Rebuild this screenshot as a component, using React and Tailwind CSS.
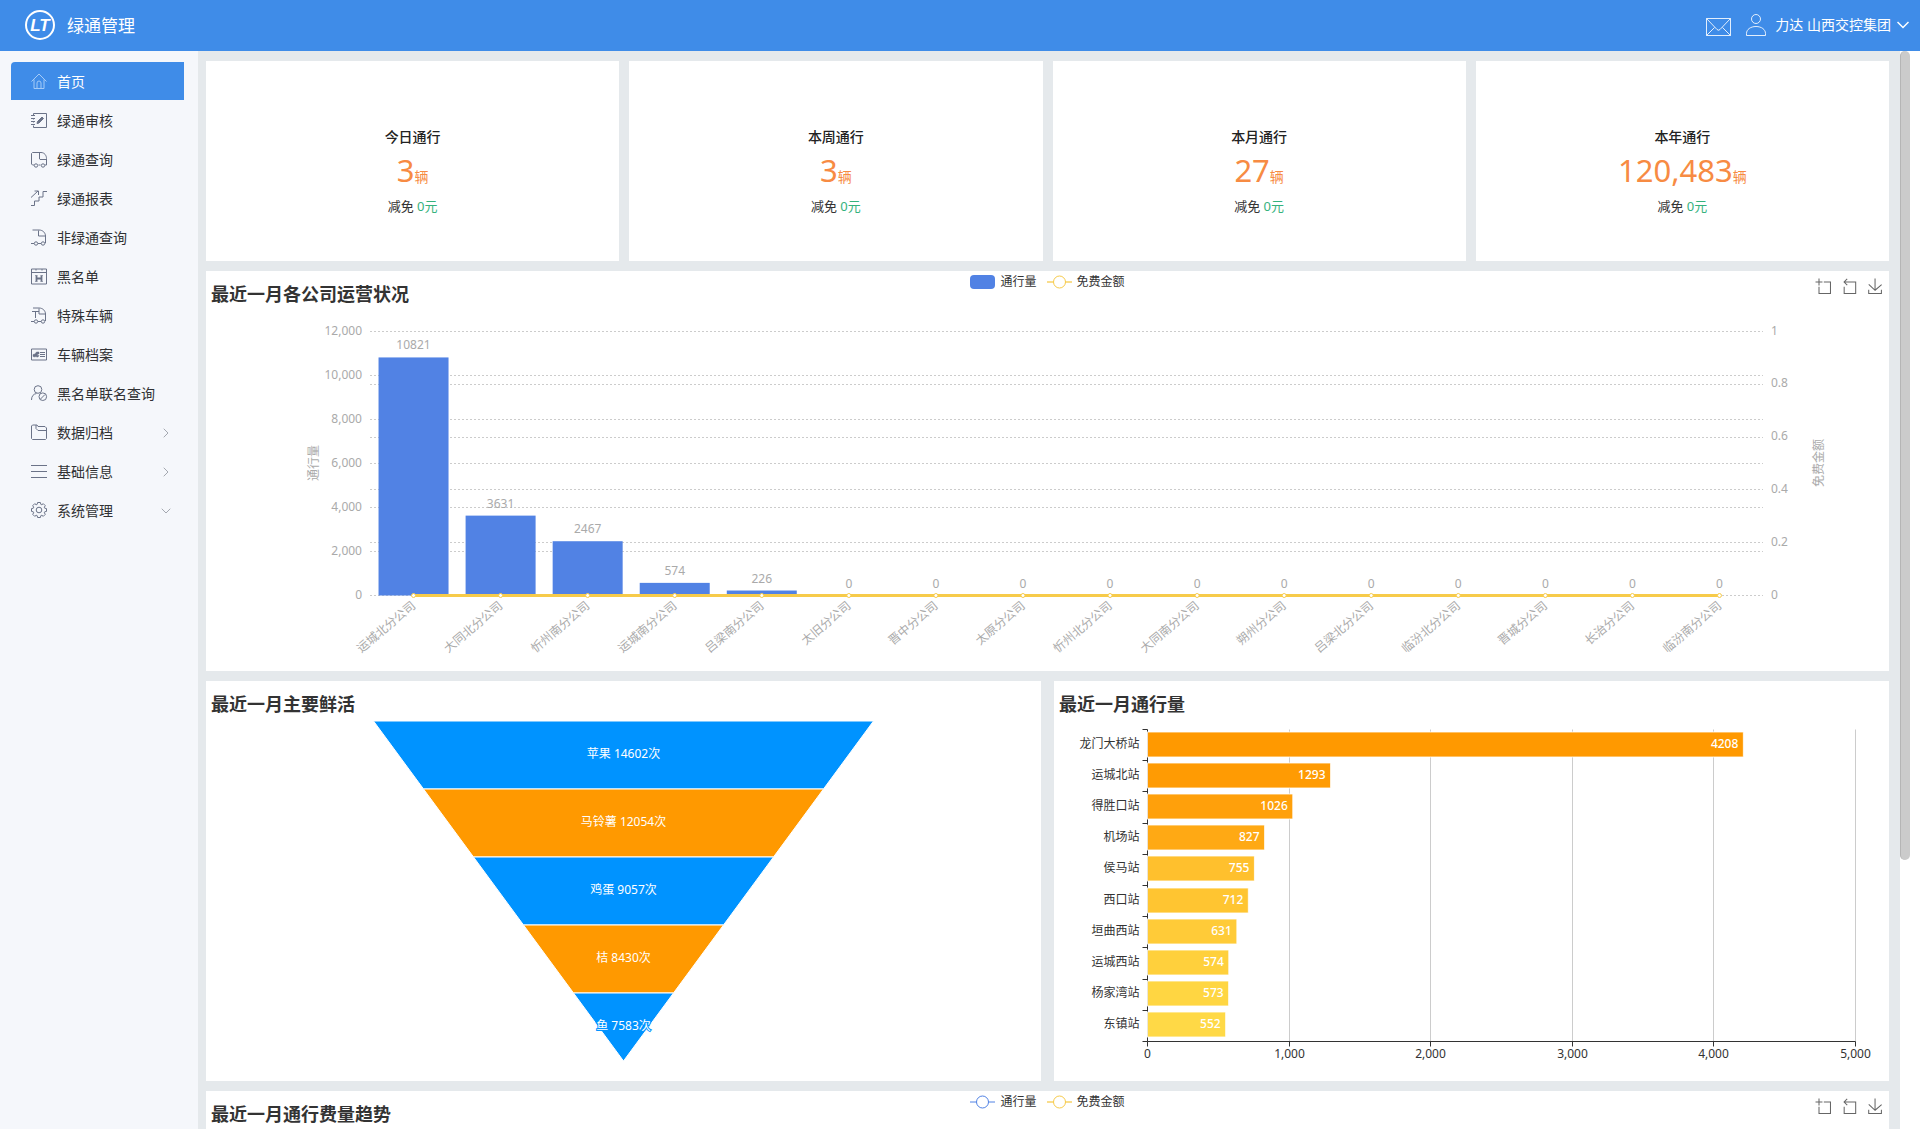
import { ChevronDown, ChevronRight } from "lucide-react";

const icons = {
  home: <path d="M.5 8.5 8 1l7.5 7.5M3 6.5v9h10v-9M6 15.5V10a2 2 0 0 1 4 0v5.5" />,
  audit: (
    <>
      <path d="M2.5 3.5v-2h13v14h-13v-2M2.5 6v1.5M2.5 9.5v1M0 3.5h4M0 6.5h4M0 9.5h4M0 12.5h4" />
      <path d="M6 11.500l.5-2 4.500-4.500 1.500 1.500-4.500 4.500z" fill="currentColor" />
    </>
  ),
  truck: (
    <>
      <path d="M3 14H1.5L.5 13V2.5l1-1H10c3.5 0 5.5 3 5.5 6V14H14M7.5 14h2M8.5 1.5V8l.5.5h6.5" />
      <circle cx="5" cy="14.5" r="1.7" />
      <circle cx="12" cy="14.5" r="1.7" />
    </>
  ),
  stairs: <path d="M0 15.5h3.5V11H8V7h4V1.500h4M0 7.500l7-6.500M3.500 1h4v4" />,
  truckOpen: (
    <>
      <path d="M1.5 1H8c4 0 6.5 3 6.5 6v7H14M7.5 1.5V7h7M0 14.5h3M7 14.5h3" />
      <circle cx="5" cy="14.5" r="1.7" />
      <circle cx="12" cy="14.5" r="1.7" />
    </>
  ),
  black: (
    <>
      <path d="M.5 1h15v15H.5zM.5 4.5h15M5 1v1.5M11 1v1.5" />
      <path d="M5.5 7.5v6M10.5 7.5v6M5.5 10.5h5" strokeWidth="1.8" />
      <path d="M4 7.500h2.500M9.500 7.500H12M4 13.500h2.500M9.500 13.500H12" strokeWidth=".6" />
    </>
  ),
  special: (
    <>
      <path d="M1 4.5h7M4.5 4.5V11M2 1h6c4 0 6.5 3 6.5 6v7M8 1.5V7h6.5M0 14.5h3M7 14.5h3" />
      <circle cx="5" cy="14.5" r="1.7" />
      <circle cx="12" cy="14.5" r="1.7" />
    </>
  ),
  archive: (
    <>
      <path d="M.5 3h15v11H.5zM9 6.5h5M9 8.5h5M9 10.5h5" />
      <path d="M2 8.5 4 8l1.5-2H8v2H6.5v1.5H8L7 11H5.5v-1L4 11l-2-.5z" fill="currentColor" strokeWidth=".5" />
    </>
  ),
  userBan: (
    <>
      <circle cx="7" cy="4.5" r="3.8" />
      <path d="M.5 15c0-4 2-6 5-6.5M9.5 14l4.5-4.5" />
      <circle cx="11.8" cy="11.7" r="3.8" />
    </>
  ),
  folder: <path d="M1.5 1H6l1 1.5h7L15.5 4v10.5l-1 1h-13l-1-1V2zM5 1v3.5l2 2h8.5" />,
  list: <path d="M0 2.5h16M0 8.5h16M0 14.5h16" />,
  gear: (
    <>
      <path
        strokeLinejoin="round"
        d="M6.6.5H9.4L9.8 2.3 10.8 2.7 12.3 1.7 14.3 3.7 13.3 5.2 13.7 6.2 15.5 6.6V9.4L13.7 9.8 13.3 10.8 14.3 12.3 12.3 14.3 10.8 13.3 9.8 13.7 9.4 15.5H6.6L6.2 13.7 5.2 13.3 3.7 14.3 1.7 12.3 2.7 10.8 2.3 9.8.5 9.4V6.6L2.3 6.2 2.7 5.2 1.7 3.7 3.7 1.7 5.2 2.7 6.2 2.3z"
      />
      <circle cx="8" cy="8" r="2.8" />
    </>
  ),
};

const menu = [
  { icon: "home", label: "首页", active: true },
  { icon: "audit", label: "绿通审核" },
  { icon: "truck", label: "绿通查询" },
  { icon: "stairs", label: "绿通报表" },
  { icon: "truckOpen", label: "非绿通查询" },
  { icon: "black", label: "黑名单" },
  { icon: "special", label: "特殊车辆" },
  { icon: "archive", label: "车辆档案" },
  { icon: "userBan", label: "黑名单联名查询" },
  { icon: "folder", label: "数据归档", arrow: ChevronRight },
  { icon: "list", label: "基础信息", arrow: ChevronRight },
  { icon: "gear", label: "系统管理", arrow: ChevronDown },
];

const stats = [
  { label: "今日通行", value: "3" },
  { label: "本周通行", value: "3" },
  { label: "本月通行", value: "27" },
  { label: "本年通行", value: "120,483" },
];

const companies = [
  ["运城北分公司", 10821],
  ["大同北分公司", 3631],
  ["忻州南分公司", 2467],
  ["运城南分公司", 574],
  ["吕梁南分公司", 226],
  ["太旧分公司", 0],
  ["晋中分公司", 0],
  ["太原分公司", 0],
  ["忻州北分公司", 0],
  ["大同南分公司", 0],
  ["朔州分公司", 0],
  ["吕梁北分公司", 0],
  ["临汾北分公司", 0],
  ["晋城分公司", 0],
  ["长治分公司", 0],
  ["临汾南分公司", 0],
];

const goods = ["苹果 14602次", "马铃薯 12054次", "鸡蛋 9057次", "桔 8430次", "鱼 7583次"];

const stations = [
  ["龙门大桥站", 4208, "#ff9900"],
  ["运城北站", 1293, "#ff9b03"],
  ["得胜口站", 1026, "#ffa00b"],
  ["机场站", 827, "#ffa914"],
  ["侯马站", 755, "#ffc02d"],
  ["西口站", 712, "#ffc531"],
  ["垣曲西站", 631, "#ffcb38"],
  ["运城西站", 574, "#ffd03c"],
  ["杨家湾站", 573, "#ffd642"],
  ["东镇站", 552, "#ffd946"],
];

const tools = [
  ["区域缩放", "M0,13.5h26.9 M13.5,26.9V0 M32.1,13.5H58V58H13.5 V32.1"],
  ["还原", "M22,1.4L9.9,13.5l12.3,12.3 M10.3,13.5H54.9v44.6 H10.3v-26"],
  ["保存为图片", "M4.7,22.9L29.3,45.5L54.7,23.4M4.6,43.6L4.6,58L53.8,58L53.8,43.6M29.2,45.1L29.2,0"],
];

function Header() {
  return (
    <header className="flex h-[51px] shrink-0 items-center justify-between bg-[#3f8ce8] pl-[25px] pr-[11px] pb-px text-white">
      <div className="flex items-center gap-3">
        <svg width="30" height="30" viewBox="0 0 30 30" aria-hidden="true">
          <circle cx="15" cy="15" r="14" fill="none" stroke="#fff" strokeWidth="2" />
          <text x="15" y="21" textAnchor="middle" fill="#fff" className="font-['Liberation_Sans',sans-serif] text-[17px] font-bold italic">
            LT
          </text>
        </svg>
        <h1 className="pt-px text-[17px]">绿通管理</h1>
      </div>
      <div className="flex items-center">
        <button aria-label="消息" className="mr-[15px] mt-1">
          <svg width="25" height="18" viewBox="0 0 25 18" fill="none" stroke="#fff" strokeOpacity="0.85" strokeWidth="1">
            <path d="M.5.5h24v17H.5zM.5.5 11 11.5q1.500 1.500 3 0L24.500.5M.5 17.500l8-8M24.500 17.500l-8-8" />
          </svg>
        </button>
        <button className="flex items-center text-sm">
          <svg width="20" height="22" viewBox="0 0 20 22" fill="none" stroke="#fff" strokeOpacity="0.85" className="mr-[9px]">
            <circle cx="10" cy="5" r="4.5" />
            <path d="M.5 21.5v-2c0-4 4-7 9.5-7s9.5 3 9.5 7v2z" />
          </svg>
          力达 山西交控集团
          <svg width="12" height="8" viewBox="0 0 12 8" fill="none" stroke="#fff" strokeWidth="1.5" className="ml-[6px]">
            <path d="M.5 1 6 6.5 11.5 1" />
          </svg>
        </button>
      </div>
    </header>
  );
}

function Sidebar() {
  return (
    <nav className="flex w-[198px] shrink-0 flex-col gap-px bg-[#f5f7fb] pl-[11px] pr-[14px] pt-[11px]">
      {menu.map((item) => (
        <a
          key={item.label}
          href="#"
          className={`flex h-[38px] items-center pt-px pl-5 pr-[10px] text-sm ${
            item.active ? "rounded-tl-sm bg-[#3f8ce8] text-white" : "text-[#303133]"
          }`}
        >
          <svg
            width="16"
            height="17"
            viewBox="0 0 16 17"
            fill="none"
            stroke="currentColor"
            strokeWidth="1"
            className={`mr-[10px] shrink-0 overflow-visible ${item.active ? "text-[#a5cbf7]" : "text-[#6b7388]"}`}
          >
            {icons[item.icon]}
          </svg>
          <span className="flex-1 whitespace-nowrap">{item.label}</span>
          {item.arrow && <item.arrow size={16} strokeWidth={1.5} className="text-[#a4a8b0]" />}
        </a>
      ))}
    </nav>
  );
}

function StatCard({ label, value }) {
  return (
    <section className="flex h-[200px] flex-col items-center justify-center bg-white pt-5">
      <h2 className="text-sm leading-5 font-medium text-[#222]">{label}</h2>
      <p className="pt-1 text-sm leading-[38px] text-[#f78b43]">
        <span className="text-[31px]">{value}</span>辆
      </p>
      <p className="text-[13px] leading-5 text-[#333]">
        减免 <span className="text-[#35b27d]">0元</span>
      </p>
    </section>
  );
}

function Legend({ bar }) {
  return (
    <div className="flex items-center gap-[10px] pt-[3px] text-xs leading-4 text-[#333]">
      <span className="flex items-center gap-[5px]">
        <svg width="25" height="14" viewBox="0 0 25 14">
          {bar ? (
            <rect width="25" height="14" rx="4" fill="#5182e4" />
          ) : (
            <>
              <path d="M0 7h25" stroke="#5182e4" strokeWidth="1" />
              <circle cx="12.5" cy="7" r="6" fill="#fff" stroke="#5182e4" />
            </>
          )}
        </svg>
        通行量
      </span>
      <span className="flex items-center gap-[5px]">
        <svg width="25" height="14" viewBox="0 0 25 14">
          <path d="M0 7h25" stroke="#f9dd8c" strokeWidth="2" />
          <circle cx="12.5" cy="7" r="6" fill="#fff" stroke="#f7cb4a" />
        </svg>
        免费金额
      </span>
    </div>
  );
}

function Panel({ title, legend, children }) {
  return (
    <section className="h-[400px] shrink-0 bg-white">
      <div className="grid h-10 grid-cols-[1fr_auto_1fr] items-start">
        <h2 className="pl-[5px] pt-2 text-lg leading-[30px] font-bold whitespace-nowrap text-[#333]">{title}</h2>
        {legend && <Legend bar={legend === "bar"} />}
        {legend && (
          <div className="flex justify-end gap-[10px] pt-[7px] pr-[6px]">
            {tools.map(([name, d]) => (
              <button key={name} aria-label={name}>
                <svg width="16" height="16" viewBox="-2 -2 62 62" fill="none" stroke="#666" strokeWidth="4">
                  <path d={d} />
                </svg>
              </button>
            ))}
          </div>
        )}
      </div>
      {children}
    </section>
  );
}

function CompanyChart() {
  const left = 164;
  const right = 1557;
  const top = 20.5;
  const bottom = 284.5;
  const h = bottom - top;
  const step = (right - left) / companies.length;
  const cx = (i) => left + step * (i + 0.5);
  const snap = (y) => Math.floor(y) + 0.5;

  return (
    <svg viewBox="0 0 1683 360" className="h-[360px] w-full text-xs" fill="#aaa">
      {[0, 1, 2, 3, 4, 5, 6].map((n) => (
        <g key={n}>
          <path d={`M${left} ${snap(bottom - (h * n) / 6)}H${right}`} stroke="#ccc" strokeDasharray="2 2" />
          <text x={left - 8} y={bottom - (h * n) / 6 + 3} textAnchor="end">
            {(n * 2000).toLocaleString("en-US")}
          </text>
        </g>
      ))}
      {[0, 1, 2, 3, 4, 5].map((n) => (
        <g key={n}>
          {n > 0 && n < 5 && (
            <path d={`M${left} ${snap(bottom - (h * n) / 5)}H${right}`} stroke="#ccc" strokeDasharray="2 2" />
          )}
          <text x={right + 8} y={bottom - (h * n) / 5 + 3}>
            {n / 5}
          </text>
        </g>
      ))}
      <text transform="translate(107 152) rotate(-90)" textAnchor="middle" dominantBaseline="central">
        通行量
      </text>
      <text transform="translate(1612 152) rotate(-90)" textAnchor="middle" dominantBaseline="central">
        免费金额
      </text>
      {companies.map(([name, value], i) => {
        const barH = (h * value) / 12000;
        return (
          <g key={name}>
            {value > 0 && <rect x={cx(i) - 35} y={bottom - barH} width="70" height={barH} fill="#5182e4" />}
            <text x={cx(i)} y={bottom - barH - 8} textAnchor="middle">
              {value}
            </text>
            <text
              transform={`translate(${cx(i)} ${bottom + 8}) rotate(-40)`}
              textAnchor="end"
              dominantBaseline="central"
            >
              {name}
            </text>
          </g>
        );
      })}
      <path d={`M${cx(0)} ${bottom}H${cx(companies.length - 1)}`} stroke="#f7cb4a" strokeWidth="3" />
      {companies.map(([name], i) => (
        <circle key={name} cx={cx(i)} cy={bottom} r="2" fill="#fff" stroke="#f7cb4a" />
      ))}
    </svg>
  );
}

function FunnelChart() {
  const mid = 417.5;
  const segH = 68;
  const half = (n) => 250 - 50 * n;

  return (
    <svg viewBox="0 0 835 360" className="h-[360px] w-full text-xs">
      {goods.map((text, i) => {
        const y = i * segH;
        const color = i % 2 ? "#ff9900" : "#0093ff";
        const last = i === goods.length - 1;
        return (
          <g key={text}>
            <path
              d={`M${mid - half(i)} ${y}H${mid + half(i)}L${mid + half(i + 1)} ${y + segH}H${mid - half(i + 1)}Z`}
              fill={color}
              stroke="#fff"
            />
            <text
              x={mid}
              y={y + 37}
              textAnchor="middle"
              fill="#fff"
              stroke={last ? color : "none"}
              strokeWidth="2"
              paintOrder="stroke"
            >
              {text}
            </text>
          </g>
        );
      })}
    </svg>
  );
}

function StationChart() {
  const left = 93.5;
  const top = 8.5;
  const bottom = 320.5;
  const unit = 141.6;
  const row = (bottom - top) / stations.length;
  const snap = (v) => Math.floor(v) + 0.5;

  return (
    <svg viewBox="0 0 835 360" className="h-[360px] w-full text-xs" fill="#333">
      {[0, 1, 2, 3, 4, 5].map((n) => {
        const x = snap(left + unit * n);
        return (
          <g key={n}>
            {n > 0 && <path d={`M${x} ${top}V${bottom}`} stroke="#ccc" />}
            <path d={`M${x} ${bottom}v5`} stroke="#333" />
            <text x={x} y={bottom + 16} textAnchor="middle">
              {(n * 1000).toLocaleString("en-US")}
            </text>
          </g>
        );
      })}
      <path d={`M${left} ${top}V${bottom}H${left + unit * 5}`} fill="none" stroke="#333" />
      {stations.map(([name, value, color], i) => {
        const y = top + row * i;
        const w = (unit * value) / 1000;
        return (
          <g key={name}>
            <path d={`M${left - 5} ${snap(y)}h5`} stroke="#333" />
            <rect x={left} y={Math.round(y + 2)} width={w} height="25" fill={color} stroke="#fff" strokeOpacity="0.8" />
            <text x={left - 8} y={y + 18} textAnchor="end">
              {name}
            </text>
            <text x={left + w - 5} y={y + 18} textAnchor="end" fill="#fff" className="font-medium">
              {value}
            </text>
          </g>
        );
      })}
      <path d={`M${left - 5} ${bottom}h5`} stroke="#333" />
    </svg>
  );
}

export default function App() {
  return (
    <div className="flex h-screen flex-col overflow-hidden bg-white font-['Noto_Sans','Noto_Sans_CJK_SC',sans-serif]">
      <Header />
      <div className="flex min-h-0 flex-1">
        <Sidebar />
        <main className="flex min-w-0 flex-1 flex-col gap-[10px] overflow-hidden bg-[#e5e9ec] pt-[10px] pr-[11px] pl-2">
          <div className="grid shrink-0 grid-cols-4 gap-[10px]">
            {stats.map((s) => (
              <StatCard key={s.label} {...s} />
            ))}
          </div>
          <Panel title="最近一月各公司运营状况" legend="bar">
            <CompanyChart />
          </Panel>
          <div className="grid shrink-0 grid-cols-2 gap-[13px]">
            <Panel title="最近一月主要鲜活">
              <FunnelChart />
            </Panel>
            <Panel title="最近一月通行量">
              <StationChart />
            </Panel>
          </div>
          <Panel title="最近一月通行费量趋势" legend="line" />
        </main>
        <div className="w-5 shrink-0 bg-white">
          <div className="h-3/4 w-[10px] rounded-full border-l border-[#b5b5b5] bg-[#cbcbcb]" />
        </div>
      </div>
    </div>
  );
}
